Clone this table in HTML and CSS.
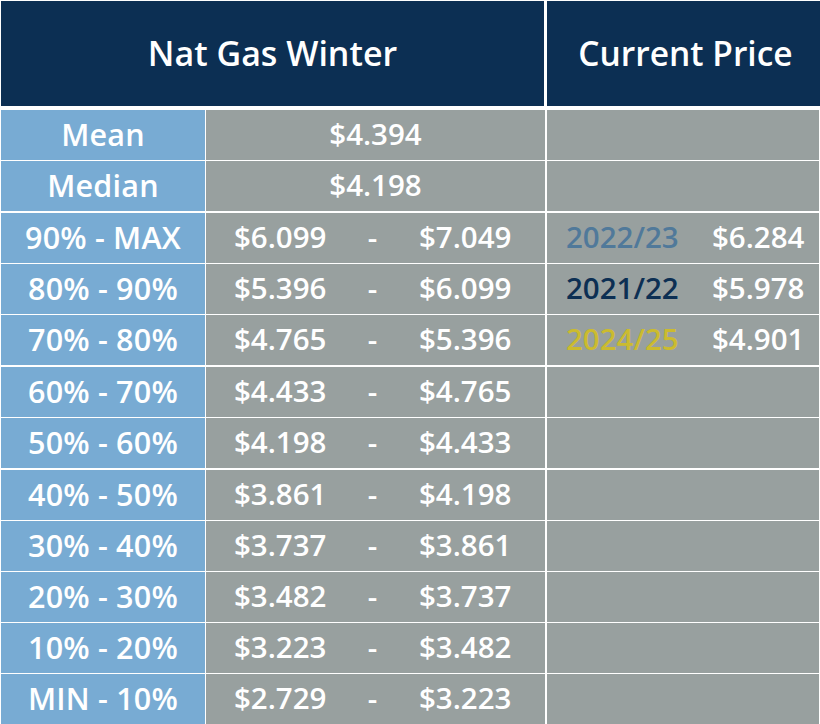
FILE: index.html
```html
<!DOCTYPE html>
<html>
<head>
<meta charset="utf-8">
<link rel="stylesheet" href="styles.css">
</head>
<body>
<div class="table">
  <div class="head">
    <div class="h-left">Nat Gas Winter</div>
    <div class="h-right">Current Price</div>
  </div>
  <div class="rows">
    <div class="row"><div class="lab">Mean</div><div class="mid single">$4.394</div><div class="cur"></div></div>
    <div class="row"><div class="lab">Median</div><div class="mid single">$4.198</div><div class="cur"></div></div>
    <div class="row thick"><div class="lab">90% - MAX</div><div class="mid range"><span>$6.099</span><span class="dash">-</span><span>$7.049</span></div><div class="cur"><span class="yr y1">2022/23</span><span>$6.284</span></div></div>
    <div class="row"><div class="lab">80% - 90%</div><div class="mid range"><span>$5.396</span><span class="dash">-</span><span>$6.099</span></div><div class="cur"><span class="yr y2">2021/22</span><span>$5.978</span></div></div>
    <div class="row"><div class="lab">70% - 80%</div><div class="mid range"><span>$4.765</span><span class="dash">-</span><span>$5.396</span></div><div class="cur"><span class="yr y3">2024/25</span><span>$4.901</span></div></div>
    <div class="row thick"><div class="lab">60% - 70%</div><div class="mid range"><span>$4.433</span><span class="dash">-</span><span>$4.765</span></div><div class="cur"></div></div>
    <div class="row"><div class="lab">50% - 60%</div><div class="mid range"><span>$4.198</span><span class="dash">-</span><span>$4.433</span></div><div class="cur"></div></div>
    <div class="row thick"><div class="lab">40% - 50%</div><div class="mid range"><span>$3.861</span><span class="dash">-</span><span>$4.198</span></div><div class="cur"></div></div>
    <div class="row"><div class="lab">30% - 40%</div><div class="mid range"><span>$3.737</span><span class="dash">-</span><span>$3.861</span></div><div class="cur"></div></div>
    <div class="row"><div class="lab">20% - 30%</div><div class="mid range"><span>$3.482</span><span class="dash">-</span><span>$3.737</span></div><div class="cur"></div></div>
    <div class="row"><div class="lab">10% - 20%</div><div class="mid range"><span>$3.223</span><span class="dash">-</span><span>$3.482</span></div><div class="cur"></div></div>
    <div class="row"><div class="lab">MIN - 10%</div><div class="mid range"><span>$2.729</span><span class="dash">-</span><span>$3.223</span></div><div class="cur"></div></div>
  </div>
</div>
</body>
</html>
```
FILE: styles.css
```css
html, body {
  margin: 0;
  padding: 0;
  background: #ffffff;
}
body {
  font-family: "Open Sans", "Liberation Sans", sans-serif;
  font-weight: 600;
  color: #ffffff;
}
.table {
  width: 820px;
  height: 724px;
  padding: 1px 0 0 1px;
  box-sizing: border-box;
  display: flex;
  flex-direction: column;
}
.head {
  display: flex;
  height: 105px;
  gap: 3px;
}
.h-left, .h-right {
  background: #0c2f53;
  display: flex;
  align-items: center;
  justify-content: center;
  font-weight: 600;
  padding-bottom: 2px;
  box-sizing: border-box;
}
.h-left { width: 543px; font-size: 34px; }
.h-right { flex: 1; font-size: 33.5px; padding-left: 4px; }
.rows {
  margin-top: 4px;
  display: flex;
  flex-direction: column;
  gap: 1px;
}
.row {
  display: grid;
  grid-template-columns: 204px 339px 273px;
  column-gap: 1px;
  height: 50px;
  font-size: 29.5px;
}
.row.thick { margin-top: 1px; }
.row > div {
  display: flex;
  align-items: center;
  padding-bottom: 3px;
  box-sizing: border-box;
}
.lab {
  background: #78abd3;
  justify-content: center;
  font-size: 30.5px;
  letter-spacing: 0.2px;
}
.mid {
  background: #98a09f;
}
.mid.single { justify-content: center; }
.mid.range {
  display: grid !important;
  grid-template-columns: 120px 37px auto;
  align-items: center;
  padding-left: 28px;
}
.mid.range span:last-child { margin-left: 28px; }
.dash { text-align: center; }
.cur {
  background: #98a09f;
  margin-left: 1px;
  padding-left: 19px;
}
.yr { width: 146px; }
.y1 { color: #50799a; }
.y2 { color: #0c2f53; }
.y3 { color: #cbbb2f; }
```
